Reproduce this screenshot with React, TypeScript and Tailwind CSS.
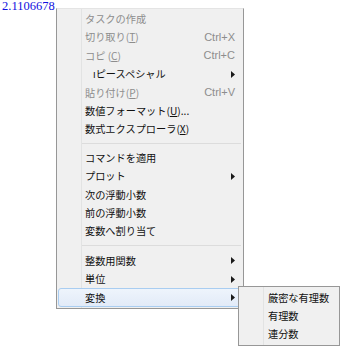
import type { ReactNode } from "react";

const jp = "font-['Noto_Sans_CJK_JP','Noto_Sans',sans-serif]";

const Arrow = () => (
  <svg width="4" height="7" viewBox="0 0 4 7" className="mr-[6px]">
    <path d="M0 0 L4 3.5 L0 7 Z" fill="#1a1a1a" />
  </svg>
);

const U = ({ children }: { children: ReactNode }) => <span className="underline underline-offset-1">{children}</span>;

interface RowProps {
  label: ReactNode;
  shortcut?: string;
  sub?: boolean;
  disabled?: boolean;
  active?: boolean;
  indent?: string;
  children?: ReactNode;
}

const Row = ({ label, shortcut, sub, disabled, active, indent = "pl-[26px]", children }: RowProps) => (
  <div
    className={`relative z-10 flex h-[18.4px] items-center justify-between ${indent} ${
      disabled ? "text-[#8d8d8d]" : "text-[#111]"
    } ${active ? "rounded-[3px] border border-[#a9cdf1] bg-gradient-to-b from-[#eef4fc] to-[#e2ebf8]" : "border border-transparent"}`}
  >
    <span className="whitespace-nowrap leading-none">{label}</span>
    {shortcut && <span className="mr-[6px] text-[11px] leading-none font-['Liberation_Sans',sans-serif]">{shortcut}</span>}
    {sub && <Arrow />}
    {children}
  </div>
);

const Sep = ({ h }: { h: string }) => (
  <div className={`relative z-10 flex ${h} items-center pl-[24px] pr-[1px]`}>
    <div className="h-[2px] w-full border-t border-[#dcdcdc] border-b-white" />
  </div>
);

export default function App() {
  return (
    <div className="relative h-[349px] w-[342px] bg-white">
      <div className="w-[56px] pl-[2px] text-[12.5px] leading-[13px] whitespace-nowrap text-[#1010e0] font-['Liberation_Serif',serif]">2.1106678</div>

      <div
        className={`absolute left-[56px] top-[8px] w-[188px] border border-[#979797] border-t-[#e4e4e4] bg-[#f0f0f0] p-[1px] text-[10.2px] ${jp}`}
      >
        <div className="absolute bottom-0 left-[24px] top-0 w-[2px] border-l border-[#e2e3e3] border-r-white" />
        <Row label="タスクの作成" disabled />
        <Row label={<>切り取り(<U>T</U>)</>} shortcut="Ctrl+X" disabled />
        <Row label={<>コピ (<U>C</U>)</>} shortcut="Ctrl+C" disabled />
        <Row label="ıピースペシャル" sub indent="pl-[34px]" />
        <Row label={<>貼り付け(<U>P</U>)</>} shortcut="Ctrl+V" disabled />
        <Row label={<>数値フォーマット(<U>U</U>)...</>} />
        <Row label={<>数式エクスプローラ(<U>X</U>)</>} />
        <Sep h="h-[10px]" />
        <Row label="コマンドを適用" />
        <Row label="プロット" sub />
        <Row label="次の浮動小数" />
        <Row label="前の浮動小数" />
        <Row label="変数へ割り当て" />
        <Sep h="h-[11px]" />
        <Row label="整数用関数" sub />
        <Row label="単位" sub />
        <Row label="変換" sub active>
          <div className="absolute left-[179px] top-[-3px] w-[102px] border border-[#979797] bg-[#f0f0f0] p-[1px]">
            <div className="absolute bottom-0 left-[24px] top-0 w-[2px] border-l border-[#e2e3e3] border-r-white" />
            <Row label="厳密な有理数" indent="pl-[27px]" />
            <Row label="有理数" indent="pl-[27px]" />
            <Row label="連分数" indent="pl-[27px]" />
          </div>
        </Row>
      </div>
    </div>
  );
}
